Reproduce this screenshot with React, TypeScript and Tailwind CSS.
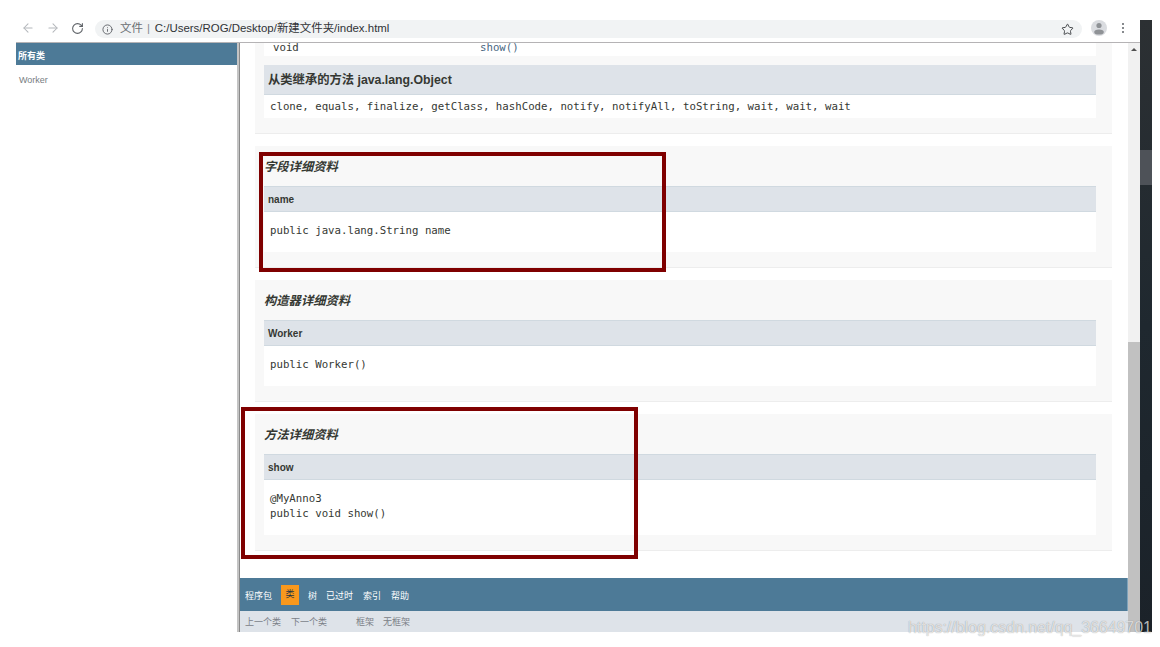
import { ArrowLeft, ArrowRight, RotateCw, Info, Star } from "lucide-react";

const sans = "font-['Liberation_Sans','Noto_Sans_CJK_SC',sans-serif]";
const mono = "font-['DejaVu_Sans_Mono','Liberation_Mono',monospace] text-[10.72px] text-[#353833]";

function Detail({ title, name, lines, bodyH, bottom }: { title: string; name: string; lines: string[]; bodyH: string; bottom: string }) {
  return (
    <section className={`ml-[15px] mr-4 bg-[#f8f8f8] border-b border-[#ededed] pl-[9px] pr-4 ${bottom}`}>
      <h3 className="h-10 pt-[2px] flex items-center text-[12.3px] leading-none font-bold italic text-[#353833]">{title}</h3>
      <div className="h-[26px] bg-[#dee3e9] border-y border-[#d0d9e0] flex items-center pl-1 text-[10px] font-bold text-[#353833]">{name}</div>
      <div className={`${bodyH} bg-white pl-[6px] pb-[4px] flex flex-col justify-center ${mono} leading-[15px]`}>
        {lines.map((l) => (
          <div key={l}>{l}</div>
        ))}
      </div>
    </section>
  );
}

export default function App() {
  return (
    <div className={`relative w-[1160px] h-[647px] overflow-hidden bg-white ${sans}`}>
      <div className="h-5" />
      <div className="flex pl-4 pr-2 h-[612px]">
        <div className="w-[1124px] flex flex-col">
          <header className="h-[23px] shrink-0 border-b border-[#b5b3b5] flex items-start text-[#5f6368]">
            <div className="w-[79px] h-4 flex items-center pl-[5px] gap-[11px]">
              <ArrowLeft size={14} className="text-[#b4b7bb]" strokeWidth={1.8} />
              <ArrowRight size={14} className="text-[#b4b7bb]" strokeWidth={1.8} />
              <RotateCw size={13} className="text-[#5f6368]" strokeWidth={2} />
            </div>
            <div className="w-[987px] h-[18px] rounded-full bg-[#f1f3f4] flex items-center pl-[7px] pr-2 text-[11.45px] whitespace-nowrap">
              <Info size={11} strokeWidth={2} />
              <span className="ml-[7px] text-[#6b6f73]">文件</span>
              <span className="ml-[4px] text-[#8a8d90]">|</span>
              <span className="ml-[5px] text-[#303236]">C:/Users/ROG/Desktop/新建文件夹/index.html</span>
              <Star size={13} strokeWidth={1.8} className="ml-auto text-[#44474a]" />
            </div>
            <div className="ml-[9px] w-4 h-4 rounded-full bg-[#dadce0] relative overflow-hidden shrink-0">
              <svg viewBox="0 0 16 16" className="w-4 h-4">
                <circle cx="8" cy="5.5" r="2.6" fill="#8f9296" />
                <ellipse cx="8" cy="12" rx="4.8" ry="2.6" fill="#8f9296" />
              </svg>
            </div>
            <div className="ml-[15px] mt-[3px] flex flex-col gap-[2px]">
              <span className="w-[2px] h-[2px] rounded-full bg-[#5f6368]" />
              <span className="w-[2px] h-[2px] rounded-full bg-[#5f6368]" />
              <span className="w-[2px] h-[2px] rounded-full bg-[#5f6368]" />
            </div>
          </header>

          <div className="flex-1 flex min-h-0">
            <aside className="w-[221px] shrink-0">
              <div className="h-[22px] pt-[5px] bg-[#4d7a97] text-white font-bold text-[9px] flex items-center pl-[2px]">所有类</div>
              <div className="mt-[9px] pl-[3px] text-[9px] leading-[13px] text-[#777c82]">Worker</div>
            </aside>
            <div className="w-[2px] bg-[#c4c4c4] shrink-0" />
            <div className="w-px bg-[#8a8a8a] shrink-0" />

            <main className="w-[888px] shrink-0 flex flex-col">
              <section className="h-[91px] ml-[15px] mr-4 bg-[#f8f8f8] border-b border-[#ededed] pl-[9px] pr-4 mb-3 shrink-0">
                <div className={`h-[13px] pb-[2px] bg-white flex items-center pl-[9px] ${mono}`}>
                  <span className="w-[207px]">void</span>
                  <span className="text-[#4a6782]">show()</span>
                </div>
                <div className="mt-[9px] h-[30px] pt-[2px] bg-[#dee3e9] border-b border-[#d0d9e0] flex items-center pl-1 text-[12.3px] font-bold text-[#353833]">从类继承的方法 java.lang.Object</div>
                <div className={`h-[23px] pt-[2px] bg-white flex items-center pl-[6px] whitespace-nowrap ${mono}`}>
                  clone, equals, finalize, getClass, hashCode, notify, notifyAll, toString, wait, wait, wait
                </div>
              </section>
              <Detail title="字段详细资料" name="name" lines={["public java.lang.String name"]} bodyH="h-10" bottom="pb-[15px] mb-3" />
              <Detail title="构造器详细资料" name="Worker" lines={["public Worker()"]} bodyH="h-10" bottom="pb-[15px] mb-3" />
              <Detail title="方法详细资料" name="show" lines={["@MyAnno3", "public void show()"]} bodyH="h-[55px]" bottom="pb-[15px]" />

              <nav className="mt-[27px] h-[33px] bg-[#4d7a97] border-r border-[#7fa3bb] flex items-center text-[9px] text-white shrink-0 pl-[5px] whitespace-nowrap">
                <span className="w-[36px] mt-[4px]">程序包</span>
                <span className="w-[18px] h-5 bg-[#f8981d] text-[#253441] flex items-center justify-center">类</span>
                <span className="ml-[9px] w-[18px] mt-[4px]">树</span>
                <span className="w-[37px] mt-[4px]">已过时</span>
                <span className="w-[28px] mt-[4px]">索引</span>
                <span className="mt-[4px]">帮助</span>
              </nav>
              <div className="flex-1 pt-[2px] bg-[#dee3e9] flex items-center pl-[5px] text-[9px] text-[#7b8087] whitespace-nowrap">
                <span className="w-[46px]">上一个类</span>
                <span className="w-[65px]">下一个类</span>
                <span className="w-[27px]">框架</span>
                <span>无框架</span>
              </div>
            </main>

            <div className="w-3 shrink-0 bg-[#f1f1f1] flex flex-col">
              <div className="h-[299px] flex justify-center pt-[5px]">
                <div className="w-0 h-0 border-x-[3px] border-x-transparent border-b-[3px] border-b-[#505050]" />
              </div>
              <div className="flex-1 bg-[#c1c1c1]" />
            </div>
          </div>
        </div>
        <div className="w-3 bg-gradient-to-b from-[#2c3033] via-[#1f282f] to-[#1b2229] flex flex-col">
          <div className="h-[130px]" />
          <div className="h-[35px] bg-[#4e5258]" />
        </div>
      </div>

      <div className="absolute left-[259px] top-[152px] w-[407px] h-[120px] border-4 border-[#7f0000]" />
      <div className="absolute left-[241px] top-[407px] w-[397px] h-[152px] border-4 border-[#7f0000]" />
      <div className="absolute left-[908px] top-[619px] text-[15.9px] leading-[18px] text-white/70 [text-shadow:0_0_1px_rgba(0,0,0,0.4)] whitespace-nowrap">https://blog.csdn.net/qq_36649701</div>
    </div>
  );
}
